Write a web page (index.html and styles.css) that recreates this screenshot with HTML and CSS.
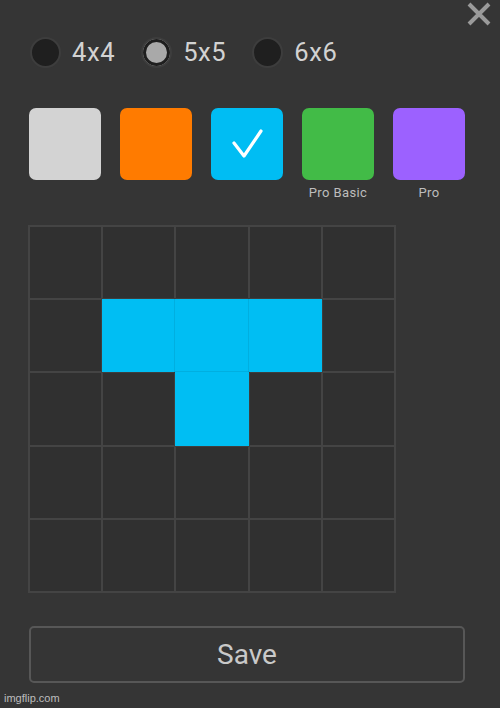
FILE: index.html
```html
<!DOCTYPE html>
<html lang="en">
<head>
<meta charset="utf-8">
<title>Piece editor</title>
<link rel="stylesheet" href="styles.css">
</head>
<body>
<div class="panel">
  <button class="close" aria-label="Close">
    <svg width="26" height="26" viewBox="0 0 26 26"><path d="M3 3 L23 23 M23 3 L3 23" stroke="#9a9a9a" stroke-width="4" stroke-linecap="butt" fill="none"/></svg>
  </button>
  <div class="radios">
    <label class="radio"><span class="dot"></span><span class="rtext">4x4</span></label>
    <label class="radio"><span class="dot selected"></span><span class="rtext">5x5</span></label>
    <label class="radio"><span class="dot"></span><span class="rtext">6x6</span></label>
  </div>
  <div class="swatches">
    <div class="swatch-item"><div class="swatch grey"></div></div>
    <div class="swatch-item"><div class="swatch orange"></div></div>
    <div class="swatch-item"><div class="swatch blue">
      <svg width="72" height="72" viewBox="0 0 72 72"><path d="M23 35 L33 48 L50 23" stroke="#ffffff" stroke-width="3.2" fill="none" stroke-linecap="round" stroke-linejoin="round"/></svg>
    </div></div>
    <div class="swatch-item"><div class="swatch green"></div><div class="slabel">Pro Basic</div></div>
    <div class="swatch-item"><div class="swatch purple"></div><div class="slabel">Pro</div></div>
  </div>
  <div class="board">
    <div class="cell"></div><div class="cell"></div><div class="cell"></div><div class="cell"></div><div class="cell"></div>
    <div class="cell"></div><div class="cell on"></div><div class="cell on"></div><div class="cell on"></div><div class="cell"></div>
    <div class="cell"></div><div class="cell"></div><div class="cell on"></div><div class="cell"></div><div class="cell"></div>
    <div class="cell"></div><div class="cell"></div><div class="cell"></div><div class="cell"></div><div class="cell"></div>
    <div class="cell"></div><div class="cell"></div><div class="cell"></div><div class="cell"></div><div class="cell"></div>
  </div>
  <button class="save">Save</button>
</div>
<div class="watermark">imgflip.com</div>
</body>
</html>
```
FILE: styles.css
```css
html, body {
  margin: 0;
  padding: 0;
  background: #353535;
}
body {
  width: 500px;
  height: 708px;
  position: relative;
  overflow: hidden;
  font-family: Roboto, "Liberation Sans", sans-serif;
}
.panel {
  padding: 37px 35px 0 29px;
}
.close {
  position: absolute;
  top: 1px;
  right: 8px;
  width: 26px;
  height: 26px;
  padding: 0;
  border: 0;
  background: none;
}
.close svg { display: block; }
.radios {
  display: flex;
  align-items: center;
  gap: 26px;
  height: 31px;
  margin-left: 1px;
}
.radio {
  display: flex;
  align-items: center;
  gap: 11px;
}
.dot {
  width: 27px;
  height: 27px;
  border-radius: 50%;
  background: #1f1f1f;
  border: 2px solid #3d3d3d;
  box-sizing: content-box;
}
.dot.selected {
  background: #a9a9a9;
  box-shadow: inset 0 0 0 3px #1f1f1f;
}
.rtext {
  color: #d2d2d2;
  font-size: 25.5px;
  letter-spacing: 0.6px;
  line-height: 31px;
}
.swatches {
  display: flex;
  gap: 19px;
  margin-top: 40px;
}
.swatch-item {
  width: 72px;
  height: 92px;
  display: flex;
  flex-direction: column;
  align-items: center;
}
.swatch {
  width: 72px;
  height: 72px;
  border-radius: 7px;
  flex: none;
}
.swatch svg { display: block; }
.grey { background: #d3d3d3; }
.orange { background: #ff7b00; }
.blue { background: #00bdf3; }
.green { background: #42bb47; }
.purple { background: #9c61ff; }
.slabel {
  margin-top: 5px;
  color: #bdbdbd;
  font-size: 13px;
  letter-spacing: 0.4px;
  line-height: 16px;
  white-space: nowrap;
}
.board {
  margin-top: 25px;
  margin-left: -1px;
  width: 368px;
  height: 368px;
  box-sizing: border-box;
  padding: 2px;
  background: #444444;
  display: grid;
  grid-template-columns: repeat(5, 1fr);
  grid-template-rows: repeat(5, 1fr);
  gap: 2px;
}
.cell {
  background: #303030;
}
.cell.on {
  background: #00bef3;
  box-shadow: 0 0 0 1px #00bef3, 0 0 0 1.5px rgba(0,0,0,0.15);
}
.save {
  display: block;
  margin-top: 33px;
  width: 436px;
  height: 57px;
  border: 2px solid #575757;
  border-radius: 5px;
  background: transparent;
  color: #c9c9c9;
  font-family: Roboto, "Liberation Sans", sans-serif;
  font-size: 28px;
  padding: 0;
}
.watermark {
  position: absolute;
  left: 4px;
  bottom: 3px;
  color: #bdbdbd;
  font-family: "Liberation Sans", Arial, sans-serif;
  font-size: 11px;
  line-height: 13px;
}
```
